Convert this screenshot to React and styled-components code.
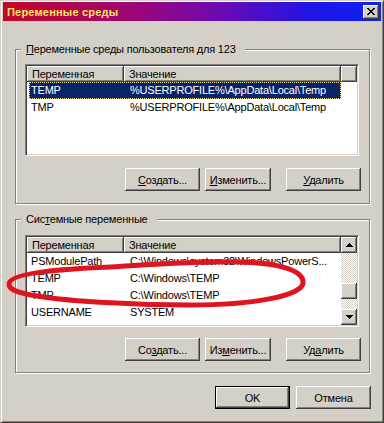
import React from "react";
import styled, { createGlobalStyle } from "styled-components";

const FACE = "#d4d0c8";
const SHADOW = "#808080";
const DARK = "#404040";
const NAVY = "#0a246a";

const userVars = [
  { name: "TEMP", value: "%USERPROFILE%\\AppData\\Local\\Temp" },
  { name: "TMP", value: "%USERPROFILE%\\AppData\\Local\\Temp" }
];

const systemVars = [
  { name: "PSModulePath", value: "C:\\Windows\\system32\\WindowsPowerS..." },
  { name: "TEMP", value: "C:\\Windows\\TEMP" },
  { name: "TMP", value: "C:\\Windows\\TEMP" },
  { name: "USERNAME", value: "SYSTEM" }
];

const CLOSE_PIXELS = [
  "11000011",
  "01100110",
  "00111100",
  "00011000",
  "00111100",
  "01100110",
  "11000011"
];

const CloseGlyph = () => (
  <svg width="8" height="7" viewBox="0 0 8 7" shapeRendering="crispEdges">
    {CLOSE_PIXELS.map((row, y) =>
      row
        .split("")
        .map((c, x) =>
          c === "1" ? <rect key={`${x}-${y}`} x={x} y={y} width="1" height="1" fill="#000" /> : null
        )
    )}
  </svg>
);

const Arrow = ({ down }) => (
  <svg width="7" height="4" viewBox="0 0 7 4" shapeRendering="crispEdges">
    {[0, 1, 2, 3].map(i => {
      const row = down ? i : 3 - i;
      return <rect key={i} x={i} y={row} width={7 - i * 2} height="1" fill="#000" />;
    })}
  </svg>
);

const Accel = ({ text, at }) => (
  <span>
    {text.slice(0, at)}
    <u>{text[at]}</u>
    {text.slice(at + 1)}
  </span>
);

const VarList = ({ rows, selected, scroll }) => (
  <ListBox>
    <ListContent>
      <HeaderRow>
        <HeaderCell $w={97}>Переменная</HeaderCell>
        <HeaderCell $w={217}>Значение</HeaderCell>
        {!scroll && <HeaderFiller />}
      </HeaderRow>
      {rows.map((r, i) => (
        <Row key={i} $selected={i === selected}>
          <NameCell>{r.name}</NameCell>
          <ValueCell>{r.value}</ValueCell>
        </Row>
      ))}
    </ListContent>
    {scroll && (
      <ScrollBar>
        <ScrollButton>
          <Arrow />
        </ScrollButton>
        <Track>
          <Thumb style={{ marginTop: scroll.thumb }} />
        </Track>
        <ScrollButton>
          <Arrow down />
        </ScrollButton>
      </ScrollBar>
    )}
  </ListBox>
);

const VarButtons = ({ accels }) => (
  <ButtonRow>
    <Button $w={75}>
      <Accel text="Создать..." at={accels[0]} />
    </Button>
    <Button $w={66} $gapRight={15}>
      <Accel text="Изменить..." at={accels[1]} />
    </Button>
    <Button $w={75}>
      <Accel text="Удалить" at={accels[2]} />
    </Button>
  </ButtonRow>
);

const App = () => (
  <>
    <GlobalStyle />
    <Window>
      <TitleBar>
        <Title>Переменные среды</Title>
        <CloseButton>
          <CloseGlyph />
        </CloseButton>
      </TitleBar>

      <Group $mt={28} $pt={14} $gap={12} $pb={12}>
        <GroupCaption>
          <Accel text="Переменные среды пользователя для 123" at={0} />
        </GroupCaption>
        <VarList rows={userVars} selected={0} />
        <VarButtons accels={[0, 0, 0]} />
      </Group>

      <Group $mt={15} $pt={15} $gap={11} $pb={11}>
        <GroupCaption>
          <Accel text="Системные переменные" at={3} />
        </GroupCaption>
        <VarList rows={systemVars} scroll={{ thumb: 30 }} />
        <VarButtons accels={[2, 2, 2]} />
      </Group>

      <DialogButtons>
        <Button $w={75} $default>
          OK
        </Button>
        <Button $w={75}>Отмена</Button>
      </DialogButtons>

      <Annotation width="384" height="423" viewBox="0 0 384 423">
        <path
          d="M 8 283 C 8 272, 60 268, 110 266 C 160 263, 200 260, 240 261 C 280 262, 303 270, 302 282 C 301 295, 250 304, 190 304 C 130 304, 60 300, 30 294 C 14 291, 8 288, 8 283 Z"
          fill="none"
          stroke="#e0141e"
          strokeWidth="5"
          strokeLinejoin="round"
        />
      </Annotation>
    </Window>
  </>
);

export default App;

const GlobalStyle = createGlobalStyle`
  html, body {
    margin: 0;
    padding: 0;
    background: ${FACE};
  }
  body {
    font-family: "Liberation Sans", Arial, sans-serif;
    font-size: 11px;
    letter-spacing: -0.2px;
    color: #000;
  }
`;

const Window = styled.div`
  position: relative;
  box-sizing: border-box;
  width: 384px;
  height: 423px;
  padding: 1px 2px 2px 2px;
  background: ${FACE};
  border-top: 1px solid ${FACE};
  border-left: 1px solid ${FACE};
  border-right: 1px solid ${DARK};
  border-bottom: 1px solid ${DARK};
  box-shadow: inset 1px 1px #fff, inset -1px -1px ${SHADOW};
  display: flex;
  flex-direction: column;
`;

const TitleBar = styled.div`
  height: 19px;
  display: flex;
  align-items: center;
  justify-content: space-between;
  padding: 0 2px 0 4px;
  background: linear-gradient(90deg, #c4062a 0%, #9c0676 35%, #6a0ab4 58%, #2414e4 80%, #0a22f6 100%);
`;

const Title = styled.span`
  color: #ffe65a;
  font-weight: bold;
  font-size: 11px;
  letter-spacing: 0.2px;
`;

const CloseButton = styled.div`
  width: 16px;
  height: 14px;
  display: flex;
  align-items: center;
  justify-content: center;
  background: ${FACE};
  box-shadow: inset -1px -1px ${DARK}, inset 1px 1px #fff, inset -2px -2px ${SHADOW};
`;

const Group = styled.div`
  position: relative;
  box-sizing: border-box;
  width: 355px;
  margin: ${p => p.$mt}px 0 0 12px;
  padding: ${p => p.$pt}px 9px ${p => p.$pb}px 9px;
  border: 1px solid ${SHADOW};
  box-shadow: 1px 1px 0 #fff, inset 1px 1px 0 #fff;
  display: flex;
  flex-direction: column;
  gap: ${p => p.$gap}px;
`;

const GroupCaption = styled.div`
  position: absolute;
  top: -7px;
  left: 5px;
  padding: 0 9px 0 5px;
  line-height: 13px;
  background: ${FACE};
  white-space: nowrap;
`;

const ListBox = styled.div`
  box-sizing: border-box;
  width: 334px;
  height: 92px;
  background: #fff;
  border-top: 1px solid ${SHADOW};
  border-left: 1px solid ${SHADOW};
  border-right: 1px solid #fff;
  border-bottom: 1px solid #fff;
  box-shadow: inset 1px 1px ${DARK}, inset -1px -1px ${FACE};
  padding: 1px;
  display: flex;
  overflow: hidden;
`;

const ListContent = styled.div`
  flex: 1;
  display: flex;
  flex-direction: column;
  overflow: hidden;
`;

const HeaderRow = styled.div`
  display: flex;
  flex: none;
  height: 16px;
`;

const HeaderCell = styled.div`
  box-sizing: border-box;
  width: ${p => p.$w}px;
  flex: none;
  padding-left: 5px;
  line-height: 16px;
  background: ${FACE};
  box-shadow: inset -1px -1px ${DARK}, inset 1px 1px #fff, inset -2px -2px ${SHADOW};
`;

const HeaderFiller = styled.div`
  flex: 1;
  background: ${FACE};
  box-shadow: inset -1px -1px ${DARK}, inset 1px 1px #fff, inset -2px -2px ${SHADOW};
`;

const Row = styled.div`
  display: flex;
  flex: none;
  height: 17px;
  line-height: 17px;
  margin-left: 2px;
  width: 312px;
  white-space: nowrap;
  background: ${p => (p.$selected ? NAVY : "transparent")};
  color: ${p => (p.$selected ? "#fff" : "#000")};
  outline: ${p => (p.$selected ? "1px dotted #e8dc9c" : "none")};
  outline-offset: -1px;
`;

const NameCell = styled.div`
  width: 95px;
  padding-left: 2px;
  box-sizing: border-box;
`;

const ValueCell = styled.div`
  padding-left: 6px;
`;

const ScrollBar = styled.div`
  width: 16px;
  flex: none;
  display: flex;
  flex-direction: column;
`;

const ScrollButton = styled.div`
  height: 16px;
  flex: none;
  display: flex;
  align-items: center;
  justify-content: center;
  background: ${FACE};
  box-shadow: inset -1px -1px ${DARK}, inset 1px 1px #fff, inset -2px -2px ${SHADOW}, inset 2px 2px ${FACE};
`;

const Track = styled.div`
  flex: 1;
  background: repeating-conic-gradient(#fff 0 25%, ${FACE} 0 50%) 0 0 / 2px 2px;
`;

const Thumb = styled.div`
  height: 16px;
  background: ${FACE};
  box-shadow: inset -1px -1px ${DARK}, inset 1px 1px #fff, inset -2px -2px ${SHADOW};
`;

const ButtonRow = styled.div`
  display: flex;
  justify-content: flex-end;
  gap: 5px;
  margin-right: -1px;
`;

const Button = styled.div`
  box-sizing: border-box;
  width: ${p => p.$w}px;
  height: 23px;
  margin-right: ${p => (p.$gapRight ? p.$gapRight - 5 : 0)}px;
  display: flex;
  align-items: center;
  justify-content: center;
  background: ${FACE};
  border: ${p => (p.$default ? "1px solid #000" : "none")};
  box-shadow: inset -1px -1px ${DARK}, inset 1px 1px #fff, inset -2px -2px ${SHADOW};
  u {
    text-underline-offset: 1px;
  }
`;

const DialogButtons = styled.div`
  display: flex;
  justify-content: flex-end;
  gap: 6px;
  margin-top: 13px;
  padding-right: 10px;
`;

const Annotation = styled.svg`
  position: absolute;
  top: 0;
  left: 0;
  pointer-events: none;
`;
